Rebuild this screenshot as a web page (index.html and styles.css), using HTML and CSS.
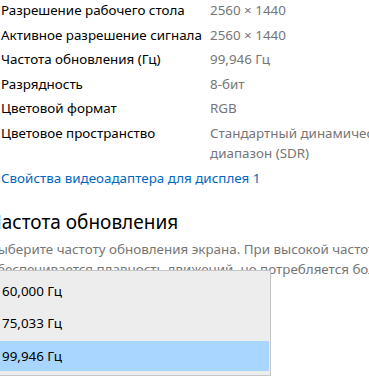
FILE: index.html
```html
<!DOCTYPE html>
<html lang="ru">
<head>
    <meta charset="UTF-8" />
    <title>Дополнительные параметры дисплея</title>
    <link rel="stylesheet" href="styles.css">
</head>
<body>

    <div class="page">
        <div class="info">
            <div class="row"><span class="label">Разрешение рабочего стола</span><span class="value">2560 × 1440</span></div>
            <div class="row"><span class="label">Активное разрешение сигнала</span><span class="value">2560 × 1440</span></div>
            <div class="row"><span class="label">Частота обновления (Гц)</span><span class="value">99,946 Гц</span></div>
            <div class="row"><span class="label">Разрядность</span><span class="value">8-бит</span></div>
            <div class="row"><span class="label">Цветовой формат</span><span class="value">RGB</span></div>
            <div class="row"><span class="label">Цветовое пространство</span><span class="value">Стандартный динамический диапазон (SDR)</span></div>
        </div>

        <a class="link" href="#">Свойства видеоадаптера для дисплея 1</a>

        <div class="section">
            <h2>Частота обновления</h2>
            <p class="desc">Выберите частоту обновления экрана. При высокой частоте обновления обеспечивается плавность движений, но потребляется больше энергии.</p>

            <!-- open combobox popup -->
            <ul class="dropdown">
                <li>60,000 Гц</li>
                <li>75,033 Гц</li>
                <li class="selected">99,946 Гц</li>
            </ul>
        </div>
    </div>

</body>
</html>
```

FILE: styles.css
```css
* {
    box-sizing: border-box;
}

html,
body {
    height: 100%;
}

body {
    margin: 0;
    overflow: hidden;
    background: #fff;
    font-family: 'Segoe UI', 'Noto Sans', sans-serif;
    font-size: 13.4px;
    color: #000;
}

.page {
    width: 640px;
    height: 100%;
    margin-left: -11px;
}

.info {
    padding-left: 12px;
    display: flex;
    flex-direction: column;
    gap: 4.5px;
}

.row {
    display: flex;
    line-height: 20px;
}

.label {
    width: 209px;
    flex-shrink: 0;
    white-space: nowrap;
}

.value {
    width: 200px;
    color: #767676;
}

.link {
    display: block;
    margin-top: 5.5px;
    padding-left: 12px;
    line-height: 20px;
    color: #0067c0;
    text-decoration: none;
}

.section {
    position: relative;
    margin-top: 20px;
}

h2 {
    margin: 0;
    font-size: 19px;
    font-weight: 400;
    line-height: 28px;
}

.desc {
    margin: 3px 0 0;
    width: 520px;
    line-height: 20px;
    color: #767676;
}

.dropdown {
    position: absolute;
    top: 62px;
    left: 0;
    width: 282px;
    margin: 0;
    padding: 4px 1px 4px 0;
    list-style: none;
    background: #ededed;
    border: 1px solid #c6c6c6;
}

.dropdown li {
    height: 32px;
    line-height: 32px;
    padding-left: 12px;
}

.dropdown li.selected {
    height: 30px;
    line-height: 30px;
    margin-top: 2px;
    background: #a8d6fe;
}
```
